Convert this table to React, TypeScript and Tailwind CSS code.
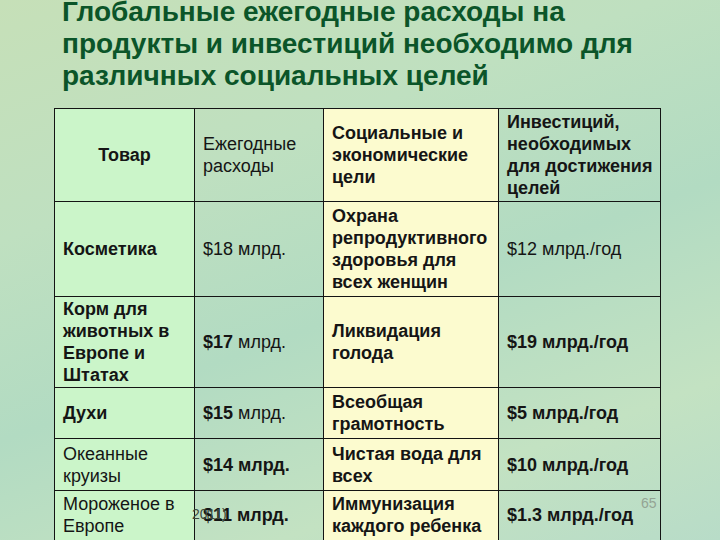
import React from 'react';

type Cell = { text: React.ReactNode; bold?: boolean; center?: boolean };

const rows: { h: string; cells: Cell[] }[] = [
  {
    h: 'h-[93px]',
    cells: [
      { text: 'Товар', bold: true, center: true },
      { text: <>Ежегодные<br />расходы</> },
      { text: <>Социальные и<br />экономические<br />цели</>, bold: true },
      { text: <>Инвестиций,<br />необходимых<br />для достижения<br />целей</>, bold: true },
    ],
  },
  {
    h: 'h-[95px]',
    cells: [
      { text: 'Косметика', bold: true },
      { text: '$18 млрд.' },
      { text: <>Охрана<br />репродуктивного<br />здоровья для<br />всех женщин</>, bold: true },
      { text: '$12 млрд./год' },
    ],
  },
  {
    h: 'h-[91px]',
    cells: [
      { text: <>Корм для<br />животных в<br />Европе и<br />Штатах</>, bold: true },
      { text: <><b>$17</b> млрд.</> },
      { text: <>Ликвидация<br />голода</>, bold: true },
      { text: '$19 млрд./год', bold: true },
    ],
  },
  {
    h: 'h-[51px]',
    cells: [
      { text: 'Духи', bold: true },
      { text: <><b>$15</b> млрд.</> },
      { text: <>Всеобщая<br />грамотность</>, bold: true },
      { text: '$5 млрд./год', bold: true },
    ],
  },
  {
    h: 'h-[52px]',
    cells: [
      { text: <>Океанные<br />круизы</> },
      { text: '$14 млрд.', bold: true },
      { text: <>Чистая вода для<br />всех</>, bold: true },
      { text: '$10 млрд./год', bold: true },
    ],
  },
  {
    h: 'h-[56px]',
    cells: [
      { text: <>Мороженое в<br />Европе</> },
      { text: '$11 млрд.', bold: true },
      { text: <>Иммунизация<br />каждого ребенка</>, bold: true },
      { text: '$1.3 млрд./год', bold: true },
    ],
  },
];

const colBg = ['bg-[#cbf5c9]', '', 'bg-[#fcfbcf]', ''];

export default function App() {
  return (
    <div className="relative h-[540px] w-[720px] overflow-hidden bg-[linear-gradient(160deg,#c6e0b8_0%,#bfe0c0_30%,#b2dbc2_55%,#c3e2c2_80%,#b8dcc8_100%)] font-['Liberation_Sans',Arial,sans-serif]">
      <h1 className="-mt-[4px] whitespace-nowrap pl-[62px] text-[28px] font-bold leading-[32px] text-[#0b5529]">
        Глобальные ежегодные расходы на
        <br />
        продукты и инвестиций необходимо для
        <br />
        различных социальных целей
      </h1>

      <div className="mt-[16px] pl-[54px]">
        <table className="w-[606px] table-fixed border-collapse text-[18px] leading-[22px] text-[#151515]">
          <colgroup>
            <col className="w-[140px]" />
            <col className="w-[129px]" />
            <col className="w-[175px]" />
            <col className="w-[162px]" />
          </colgroup>
          <tbody>
            {rows.map((row, i) => (
              <tr key={i} className={row.h}>
                {row.cells.map((c, j) => (
                  <td
                    key={j}
                    className={`whitespace-nowrap border border-[#141414] px-[8px] align-middle ${
                      i === rows.length - 1 ? 'pt-0 pb-[8px]' : 'py-0'
                    } ${colBg[j]} ${c.bold ? 'font-bold' : 'font-normal'} ${
                      c.center ? 'text-center' : 'text-left'
                    }`}
                  >
                    {c.text}
                  </td>
                ))}
              </tr>
            ))}
          </tbody>
        </table>
      </div>

      {/* footer text of the slide, lying over the last row */}
      <span className="absolute left-[192px] top-[505px] text-[14px] leading-[18px] text-[#3c4a3c]">2011)</span>
      <span className="absolute left-[641px] top-[494px] text-[14px] leading-[18px] text-[#94a494]">65</span>
    </div>
  );
}
